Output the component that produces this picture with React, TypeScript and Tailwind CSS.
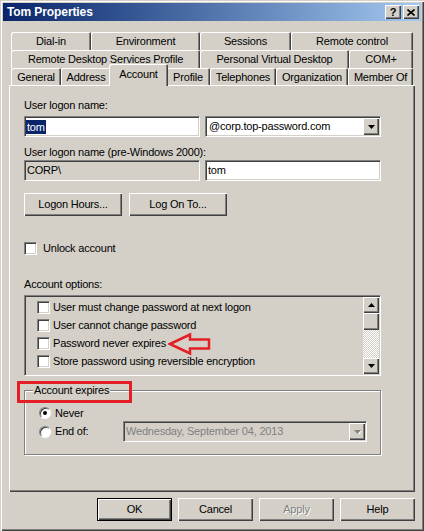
import type { ReactNode } from 'react';

const raised = 'bg-[#d4d0c8] shadow-[inset_1px_1px_0_#fff,inset_-1px_-1px_0_#404040,inset_-2px_-2px_0_#808080]';
const sunken =
  'border border-t-[#808080] border-l-[#808080] border-b-white border-r-white shadow-[inset_1px_1px_0_#404040,inset_-1px_-1px_0_#d4d0c8]';
const tab = 'flex items-center justify-center rounded-t-[2px] shadow-[inset_1px_1px_0_#fff,inset_-1px_0_0_#404040,inset_-2px_0_0_#808080]';

const row1 = [
  { name: 'Dial-in', w: 'w-[80px]' },
  { name: 'Environment', w: 'w-[109px]' },
  { name: 'Sessions', w: 'w-[91px]' },
  { name: 'Remote control', w: 'w-[122px]' },
];

const row2 = [
  { name: 'Remote Desktop Services Profile', w: 'w-[189px]' },
  { name: 'Personal Virtual Desktop', w: 'w-[149px]' },
  { name: 'COM+', w: 'w-[64px]' },
];

const row3 = [
  { name: 'General', w: 'w-[50px]' },
  { name: 'Address', w: 'w-[50px]' },
  { name: 'Account', w: 'w-[59px]', active: true },
  { name: 'Profile', w: 'w-[44px]' },
  { name: 'Telephones', w: 'w-[66px]' },
  { name: 'Organization', w: 'w-[72px]' },
  { name: 'Member Of', w: 'w-[65px]' },
];

const options = [
  'User must change password at next logon',
  'User cannot change password',
  'Password never expires',
  'Store password using reversible encryption',
];

const Arrow = ({ disabled }: { disabled?: boolean }) => (
  <svg width="7" height="4" viewBox="0 0 7 4">
    {disabled && <path d="M1 1h7L4.5 4.5z" fill="#fff" />}
    <path d="M0 0h7L3.5 4z" fill={disabled ? '#808080' : '#000'} />
  </svg>
);

const Checkbox = () => <div className={`w-[13px] h-[13px] bg-white shrink-0 ${sunken}`} />;

const Radio = ({ checked }: { checked?: boolean }) => (
  <div className="w-[12px] h-[12px] rounded-full bg-white border border-t-[#808080] border-l-[#808080] border-b-white border-r-white shadow-[inset_1px_1px_0_#404040] flex items-center justify-center shrink-0">
    {checked && <div className="w-[4px] h-[4px] rounded-full bg-black" />}
  </div>
);

const Button = ({ children, w, isDefault, disabled }: { children: ReactNode; w: string; isDefault?: boolean; disabled?: boolean }) => (
  <div className={`${w} h-[23px] ${isDefault ? 'border border-black' : ''}`}>
    <div
      className={`w-full h-full flex items-center justify-center ${raised} ${
        disabled ? 'text-[#808080] [text-shadow:1px_1px_0_#fff]' : 'text-black'
      }`}
    >
      {children}
    </div>
  </div>
);

export default function App() {
  return (
    <div className="w-[424px] h-[531px] bg-[#d4d0c8] relative overflow-hidden font-['Liberation_Sans',Arial,sans-serif] text-[11px] tracking-[-0.2px] leading-[13px] text-black shadow-[inset_1px_1px_0_#d4d0c8,inset_2px_2px_0_#fff,inset_-1px_-1px_0_#404040,inset_-2px_-2px_0_#808080]">
      <div className="flex flex-col h-[530px]">
        {/* title bar */}
        <div className="mx-[3px] mt-[3px] h-[18px] bg-linear-to-r from-[#0a246a] to-[#a6caf0] flex items-center pl-[4px] pr-[2px]">
          <span className="text-white font-bold text-[12px] tracking-[-0.1px]">Tom Properties</span>
          <div className="ml-auto flex gap-[2px]">
            <div className={`w-[16px] h-[14px] ${raised} flex items-center justify-center font-bold text-[11px]`}>?</div>
            <div className={`w-[16px] h-[14px] ${raised} flex items-center justify-center`}>
              <svg width="8" height="7" viewBox="0 0 8 7">
                <path d="M0.5 0.5L7.5 6.5M7.5 0.5L0.5 6.5" stroke="#000" strokeWidth="1.6" />
              </svg>
            </div>
          </div>
        </div>

        {/* tabs */}
        <div className="ml-[11px] mt-[11px] w-[402px]">
          <div className="flex h-[18px]">
            {row1.map((t) => (
              <div key={t.name} className={`${t.w} h-[18px] ${tab}`}>{t.name}</div>
            ))}
          </div>
          <div className="flex h-[18px]">
            {row2.map((t) => (
              <div key={t.name} className={`${t.w} h-[18px] ${tab}`}>{t.name}</div>
            ))}
          </div>
          <div className="flex h-[17px]">
            {row3.map((t) =>
              t.active ? (
                <div
                  key={t.name}
                  className={`${t.w} h-[22px] -mx-[2px] -mt-[4px] relative z-10 bg-[#d4d0c8] pb-[2px] ${tab}`}
                >
                  {t.name}
                </div>
              ) : (
                <div key={t.name} className={`${t.w} h-[17px] pt-[1px] ${tab}`}>{t.name}</div>
              )
            )}
          </div>
        </div>

        {/* panel */}
        <div className="ml-[9px] w-[406px] h-[407px] px-[15px] flex flex-col shadow-[inset_1px_1px_0_#fff,inset_-1px_-1px_0_#404040,inset_-2px_-2px_0_#808080]">
          <div className="mt-[14px] h-[13px]">User logon name:</div>
          <div className="mt-[4px] flex gap-[5px]">
            <div className={`w-[176px] h-[21px] bg-white ${sunken} flex items-center pl-[1px]`}>
              <span className="bg-[#0a246a] text-white px-[1px] leading-[14px]">tom</span>
            </div>
            <div className={`w-[176px] h-[21px] bg-white ${sunken} flex items-center pl-[3px] pr-[1px]`}>
              <span>@corp.top-password.com</span>
              <div className={`ml-auto w-[16px] h-[17px] ${raised} flex items-center justify-center`}>
                <Arrow />
              </div>
            </div>
          </div>

          <div className="mt-[9px] h-[13px]">User logon name (pre-Windows 2000):</div>
          <div className="mt-[1px] flex gap-[5px]">
            <div className={`w-[176px] h-[21px] bg-[#d4d0c8] ${sunken} flex items-center pl-[2px]`}>CORP\</div>
            <div className={`w-[176px] h-[21px] bg-white ${sunken} flex items-center pl-[2px]`}>tom</div>
          </div>

          <div className="mt-[12px] flex gap-[7px]">
            <Button w="w-[98px]">Logon Hours...</Button>
            <Button w="w-[98px]">Log On To...</Button>
          </div>

          <div className="mt-[26px] flex items-center gap-[6px] h-[13px]">
            <Checkbox />
            <span>Unlock account</span>
          </div>

          <div className="mt-[23px] h-[13px]">Account options:</div>
          <div className={`mt-[4px] w-[357px] h-[81px] ${sunken} flex`}>
            <div className="flex-1 pt-[2px] pl-[12px] flex flex-col">
              {options.map((o) => (
                <div key={o} className="h-[18px] flex items-center gap-[3px]">
                  <Checkbox />
                  <span>{o}</span>
                </div>
              ))}
            </div>
            <div className="w-[16px] flex flex-col mt-[1px] mb-[1px] mr-[1px]">
              <div className={`h-[16px] ${raised} flex items-center justify-center`}>
                <div className="rotate-180 flex">
                  <Arrow />
                </div>
              </div>
              <div className={`h-[17px] ${raised}`} />
              <div className="flex-1 bg-[repeating-conic-gradient(#fff_0_25%,#d4d0c8_0_50%)] bg-size-[2px_2px]" />
              <div className={`h-[16px] ${raised} flex items-center justify-center`}>
                <Arrow />
              </div>
            </div>
          </div>

          {/* account expires group */}
          <div className="mt-[14px] w-[357px] h-[65px] relative border border-[#808080] shadow-[1px_1px_0_#fff,inset_1px_1px_0_#fff] flex flex-col">
            <div className="absolute -top-[7px] left-[8px] px-[1px] bg-[#d4d0c8] h-[13px]">Account expires</div>
            <div className="mt-[16px] pl-[14px] flex items-center gap-[4px] h-[12px]">
              <Radio checked />
              <span>Never</span>
            </div>
            <div className="mt-[2px] pl-[14px] flex items-center gap-[4px] h-[21px]">
              <Radio />
              <span className="w-[64px]">End of:</span>
              <div className={`w-[244px] h-[21px] bg-[#d4d0c8] ${sunken} flex items-center pl-[2px] pr-[1px] text-[#808080]`}>
                <span>Wednesday, September 04, 2013</span>
                <div className={`ml-auto w-[16px] h-[17px] ${raised} flex items-center justify-center`}>
                  <Arrow disabled />
                </div>
              </div>
            </div>
          </div>
        </div>

        {/* dialog buttons */}
        <div className="mt-[6px] ml-[97px] flex gap-[6px]">
          <Button w="w-[75px]" isDefault>OK</Button>
          <Button w="w-[75px]">Cancel</Button>
          <Button w="w-[75px]" disabled>Apply</Button>
          <Button w="w-[75px]">Help</Button>
        </div>
      </div>

      {/* annotations */}
      <svg className="absolute left-[168px] top-[332px]" width="46" height="24" viewBox="0 0 46 24">
        <path d="M2 12L22 2.5V7.5H41V16.5H22V21.5Z" fill="none" stroke="#e31e24" strokeWidth="2.5" strokeLinejoin="miter" />
      </svg>
      <div className="absolute left-[17px] top-[381px] w-[115px] h-[22px] border-[3px] border-[#e31e24]" />
    </div>
  );
}
